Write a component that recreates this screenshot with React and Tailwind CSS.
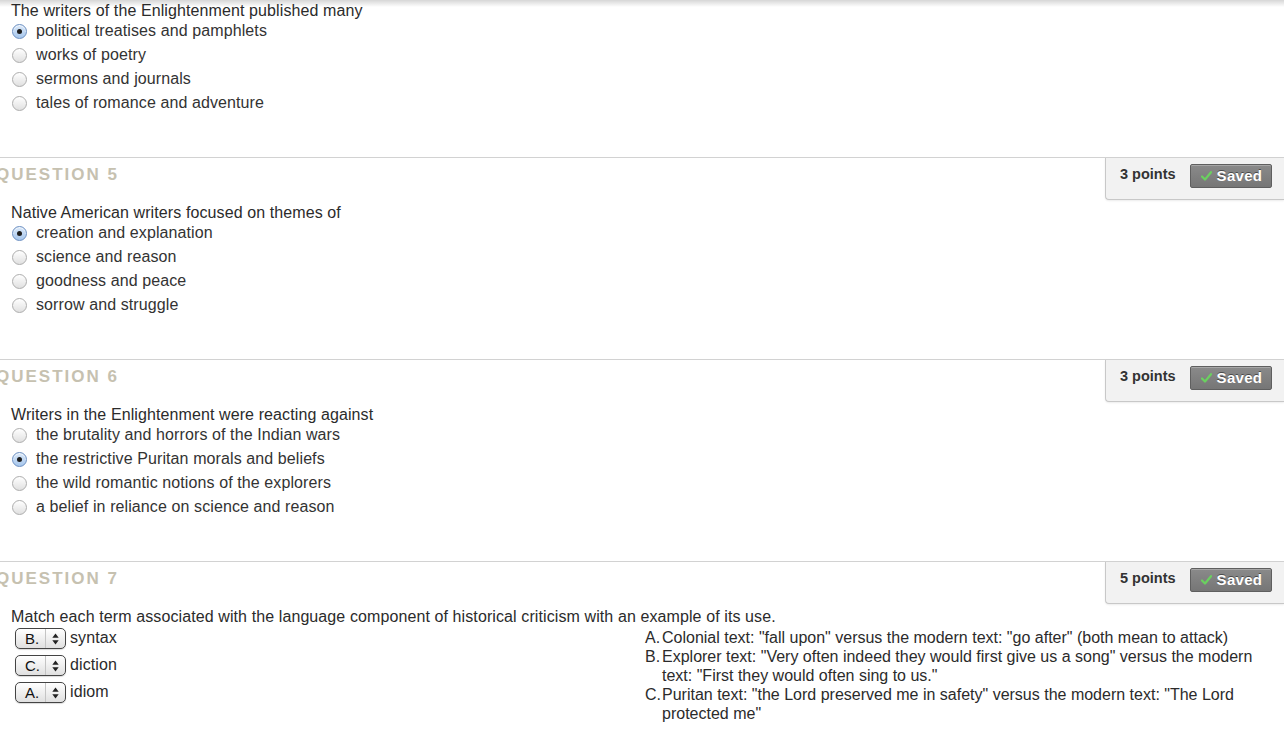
import React from "react";

function Radio({ checked }) {
  if (checked) {
    return (
      <span className="relative flex items-center justify-center w-[15px] h-[15px] rounded-full border border-[#6b8fc2] bg-linear-to-b from-[#dbe9f9] to-[#a6c6ec] shadow-[inset_0_1px_1px_rgba(255,255,255,0.8)] shrink-0">
        <span className="w-[5px] h-[5px] rounded-full bg-[#1e1e1e]" />
      </span>
    );
  }
  return (
    <span className="w-[15px] h-[15px] rounded-full border border-[#adadad] bg-linear-to-b from-[#ffffff] to-[#e0e0e0] shadow-[0_1px_0_rgba(255,255,255,0.6)] shrink-0" />
  );
}

function Option({ text, checked }) {
  return (
    <div className="flex items-center h-[24px] pl-[12px]">
      <Radio checked={checked} />
      <span className="ml-[9px] text-[16px] tracking-[0.1px] text-[#333333] leading-[20px]">{text}</span>
    </div>
  );
}

function Check() {
  return (
    <svg width="11" height="10" viewBox="0 0 11 10" className="shrink-0">
      <path d="M1 5.5 L4 8.5 L10 1.2" fill="none" stroke="#6ad15f" strokeWidth="2.2" strokeLinecap="round" strokeLinejoin="round" />
    </svg>
  );
}

function Header({ num, points }) {
  return (
    <div className="flex justify-between items-start">
      <div className="-ml-[4px] mt-[7px] text-[17px] leading-[20px] font-bold tracking-[2px] text-[#c6c1b0]">
        QUESTION {num}
      </div>
      <div className="w-[179px] h-[42px] bg-[#f2f2f2] border-l border-b border-[#c8c8c8] rounded-bl-[4px] shadow-[0_1px_2px_rgba(0,0,0,0.08)] flex items-start pt-[6px] pl-[14px]">
        <div className="h-[22px] flex items-center text-[14.5px] font-bold text-[#333333]">{points} points</div>
        <div className="ml-[14px] w-[82px] h-[24px] rounded-[2px] border border-[#5f5f5f] bg-linear-to-b from-[#8a8a8a] to-[#767676] flex items-center pl-[10px] gap-[5px] shadow-[inset_0_1px_0_rgba(255,255,255,0.25)]">
          <Check />
          <span className="text-[15px] font-bold text-white [text-shadow:0_-1px_0_rgba(0,0,0,0.45)] tracking-[0.3px]">Saved</span>
        </div>
      </div>
    </div>
  );
}

function Question({ text, options }) {
  return (
    <div>
      <div className="pl-[11px] h-[19px] text-[16px] tracking-[0.1px] leading-[21px] text-[#2b2b2b]">{text}</div>
      {options.map((o, i) => (
        <Option key={i} text={o.t} checked={o.c} />
      ))}
    </div>
  );
}

function Arrows() {
  return (
    <svg width="7" height="12" viewBox="0 0 7 12">
      <path d="M3.5 0.5 L6.7 4.8 L0.3 4.8 Z" fill="#222" />
      <path d="M3.5 11.5 L6.7 7.2 L0.3 7.2 Z" fill="#222" />
    </svg>
  );
}

function Select({ value, label }) {
  return (
    <div className="flex items-center h-[27px]">
      <div className="w-[51px] h-[21px] rounded-[5px] border border-[#444] bg-linear-to-b from-[#ffffff] to-[#e0e0e0] flex items-center shadow-[0_1px_1px_rgba(0,0,0,0.15)]">
        <span className="w-[29px] pl-[9px] text-[15px] leading-[18px] text-[#111]">{value}</span>
        <span className="w-px h-[19px] bg-[#c4c4c4]" />
        <span className="flex-1 flex justify-center items-center">
          <Arrows />
        </span>
      </div>
      <span className="ml-[4px] -mt-[2px] text-[16px] tracking-[0.1px] text-[#2b2b2b]">{label}</span>
    </div>
  );
}

function Answer({ letter, text }) {
  return (
    <div className="flex text-[16px] leading-[19px] text-[#2b2b2b]">
      <span className="w-[17px] shrink-0">{letter}</span>
      <span>{text}</span>
    </div>
  );
}

export default function App() {
  return (
    <div className="relative w-[1284px] h-[731px] bg-white overflow-hidden font-['Liberation_Sans',Arial,Helvetica,sans-serif]">
      <div className="absolute top-0 left-0 right-0 h-[7px] bg-linear-to-b from-[rgba(0,0,0,0.16)] to-transparent pointer-events-none" />

      {/* Question 4 (partial) */}
      <div className="pb-[42px]">
        <Question
          text="The writers of the Enlightenment published many"
          options={[
            { t: "political treatises and pamphlets", c: true },
            { t: "works of poetry" },
            { t: "sermons and journals" },
            { t: "tales of romance and adventure" },
          ]}
        />
      </div>

      {/* Question 5 */}
      <div className="border-t border-[#d2d2d2] pb-[42px]">
        <Header num={5} points={3} />
        <div className="mt-[2px]">
          <Question
            text="Native American writers focused on themes of"
            options={[
              { t: "creation and explanation", c: true },
              { t: "science and reason" },
              { t: "goodness and peace" },
              { t: "sorrow and struggle" },
            ]}
          />
        </div>
      </div>

      {/* Question 6 */}
      <div className="border-t border-[#d2d2d2] pb-[42px]">
        <Header num={6} points={3} />
        <div className="mt-[2px]">
          <Question
            text="Writers in the Enlightenment were reacting against"
            options={[
              { t: "the brutality and horrors of the Indian wars" },
              { t: "the restrictive Puritan morals and beliefs", c: true },
              { t: "the wild romantic notions of the explorers" },
              { t: "a belief in reliance on science and reason" },
            ]}
          />
        </div>
      </div>

      {/* Question 7 */}
      <div className="border-t border-[#d2d2d2]">
        <Header num={7} points={5} />
        <div className="mt-[2px]">
          <div className="pl-[11px] h-[19px] text-[16px] tracking-[0.1px] leading-[21px] text-[#2b2b2b]">
            Match each term associated with the language component of historical criticism with an example of its use.
          </div>
          <div className="grid grid-cols-2">
            <div className="pl-[15px]">
              <Select value="B." label="syntax" />
              <Select value="C." label="diction" />
              <Select value="A." label="idiom" />
            </div>
            <div className="pl-[3px] pt-[3px] pr-[20px]">
              <Answer letter="A." text={'Colonial text: "fall upon" versus the modern text: "go after" (both mean to attack)'} />
              <Answer letter="B." text={'Explorer text: "Very often indeed they would first give us a song" versus the modern text: "First they would often sing to us."'} />
              <Answer letter="C." text={'Puritan text: "the Lord preserved me in safety" versus the modern text: "The Lord protected me"'} />
            </div>
          </div>
        </div>
      </div>
    </div>
  );
}
